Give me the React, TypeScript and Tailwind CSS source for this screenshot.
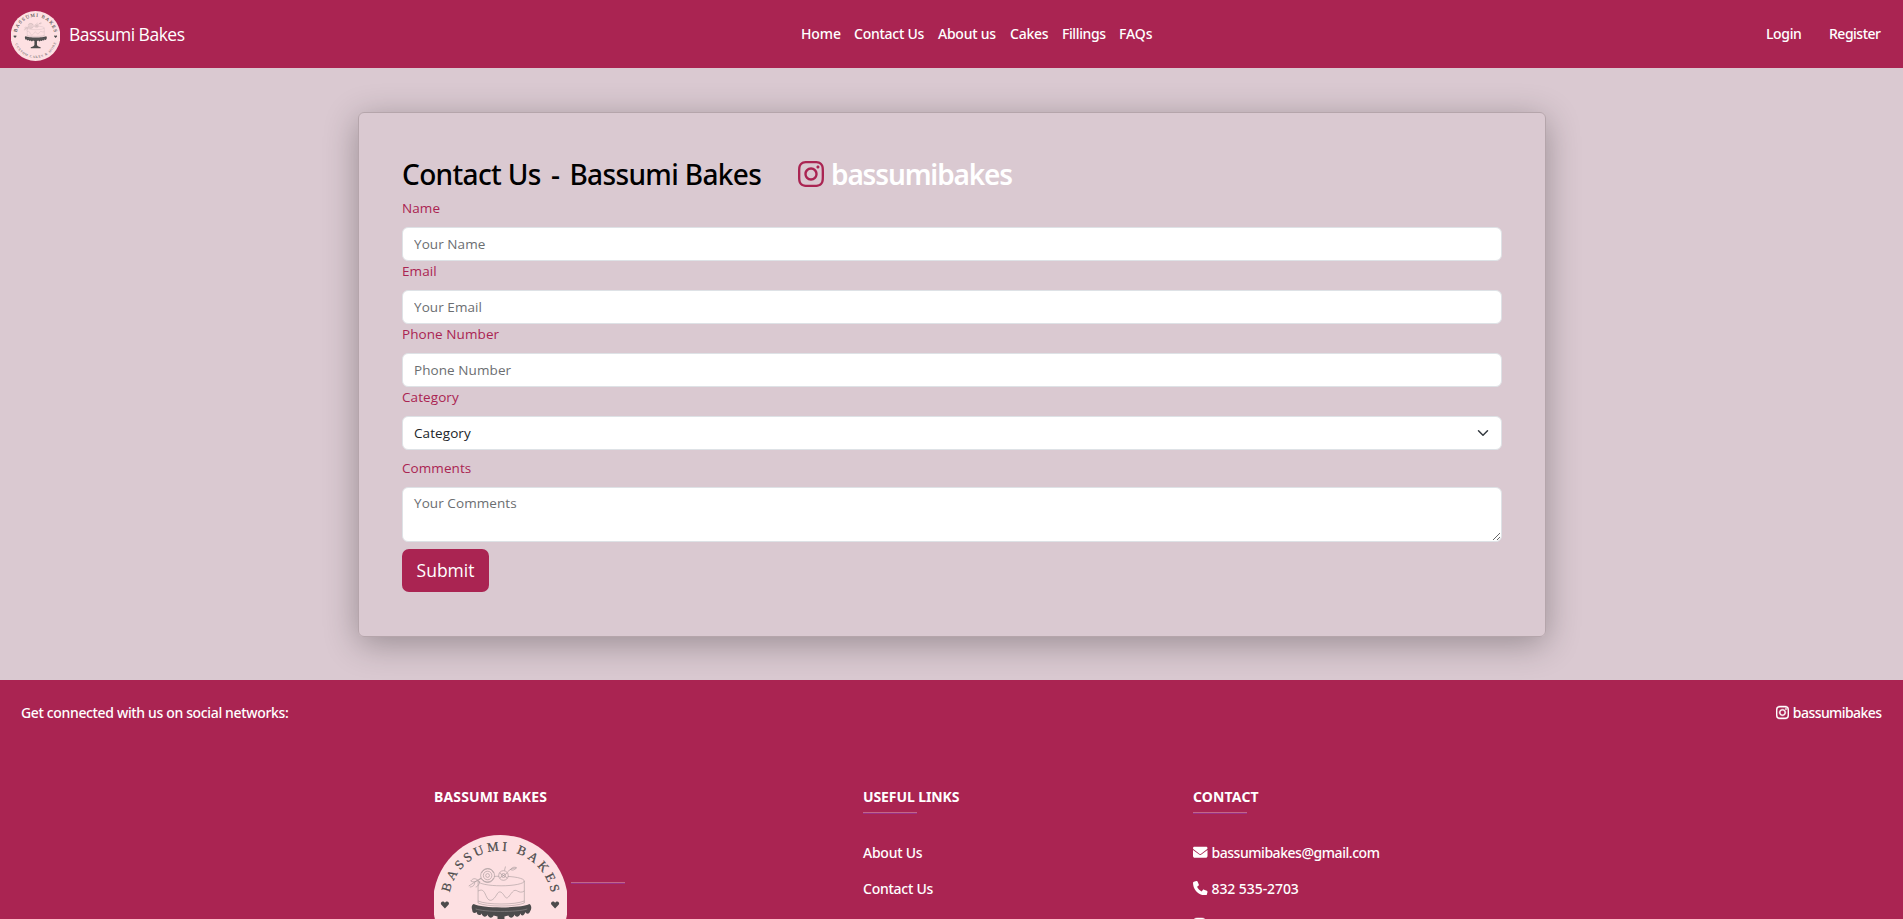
import type { ReactNode } from "react";
import { FaEnvelope, FaInstagram, FaPhone } from "react-icons/fa6";

function Logo({ id, className }: { id: string; className: string }) {
  return (
    <svg viewBox="0 0 134 136" preserveAspectRatio="none" className={className}>
      <defs>
        <path id={`${id}-top`} d="M15.5 59.5 A52.2 52.2 0 0 1 118.5 59.5" />
        <path id={`${id}-bottom`} d="M10 86 A59.8 59.8 0 0 0 124 86" />
      </defs>
      <circle cx="67" cy="68" r="68" fill="#fde0e2" />
      <g fill="#4c4b4c" fontFamily="'Liberation Serif', serif">
        <text fontSize="13" stroke="#4c4b4c" strokeWidth="0.25">
          <textPath href={`#${id}-top`} startOffset="2" textLength="143">BASSUMI BAKES</textPath>
        </text>
        <text fontSize="9">
          <textPath href={`#${id}-bottom`} startOffset="4" textLength="146">CUSTOM CAKES &amp; MORE</textPath>
        </text>
        <path d="M11 73.5 L7.2 69.6 C5.8 67 9.4 65.2 11 67.8 C12.6 65.2 16.2 67 14.8 69.6 Z" />
        <path d="M122 73.5 L118.2 69.6 C116.8 67 120.4 65.2 122 67.8 C123.6 65.2 127.2 67 125.8 69.6 Z" />
        <path d="M40 69 C48 73.5 88 73.5 96 69 C98.500 70 98.500 74 97 76 C95.500 80 93 79 92 77 C91 81 88 81.500 87 78.500 C86 82.500 82 82.500 81 79.500 C80 83.500 76 83.500 75 80.500 L71 81.500 L71 92 C71 95.500 75 97 81 98.500 L81 101.500 L54 101.500 L54 98.500 C60 97 64 95.500 64 92 L64 81.500 L60 80.500 C59 83.500 55 83.500 54 79.500 C53 82.500 49 82.500 48 78.500 C47 81 43 80.500 43 77 C41 79 38.500 78 38.500 75 C37.500 72 38 70 40 69 Z" />
      </g>
      <path d="M42 74 C51 77 83 77.500 94 74" fill="none" stroke="#8a8586" strokeWidth="0.7" />
      <g fill="none" stroke="#a79a9c" strokeWidth="0.6">
        <ellipse cx="67.700" cy="46" rx="23.300" ry="4.800" />
        <path d="M44.400 46 V68 C53 72 82 72 91 68 V46" />
        <path d="M44.400 66 C53 70 82 70 91 66" />
        <path d="M44.400 56 C50 53 51 58 53 62 C56 68 60 65 63 60 C66 54 69 58 71 61 C74 66 76 60 79 57 C83 52 85 60 91 56" />
      </g>
      <g fill="none" stroke="#9a8f91" strokeWidth="0.55">
        <circle cx="54" cy="40.500" r="7" fill="#fde0e2" />
        <circle cx="54" cy="40.500" r="4.300" />
        <circle cx="54" cy="40.500" r="1.900" />
        <path d="M48 38 C50 33 58 32 60 38 M48 44 C51 48 58 48 60 43" />
        <circle cx="70" cy="40.500" r="4.800" fill="#fde0e2" />
        <circle cx="70" cy="40.500" r="2" />
        <path d="M66 38 L74 43 M74 38 L66 43 M71 35.500 L72 31.500 M74 37 C78 33 80 33.500 83 33 M77 34.500 C80 30.500 84 33 83 33 C80 36 78 35 77 34.500" />
        <path d="M47.500 43 L35 51 M44 45 C40 42 38 45 37 46 C40 48 43 46 44 45 M41 47.500 C41 51 38 52 36 52 M46 46 C46 50 43 52 42 52" />
      </g>
    </svg>
  );
}

const links = [
  { label: "Home", cls: "w-[53px] tracking-[-0.1px]" },
  { label: "Contact Us", cls: "w-[84px] tracking-[-0.25px]" },
  { label: "About us", cls: "w-[72px] tracking-[-0.25px]" },
  { label: "Cakes", cls: "w-[52px] tracking-[-0.25px]" },
  { label: "Fillings", cls: "w-[57px] tracking-[-0.4px]" },
  { label: "FAQs", cls: "w-[34px] tracking-[-0.1px]" },
];

const fieldClass =
  "block w-full rounded-[6px] border border-[#dee2e6] bg-white pl-[11.500px] pr-[11px] text-[13.5px] leading-[21px] tracking-[0.08px] text-[#212529] placeholder:text-[#6b6e71] placeholder:opacity-100 outline-none";

function Label({ children, cls = "" }: { children: ReactNode; cls?: string }) {
  return (
    <label className={`mb-[8px] block pl-[0.500px] text-[13.5px] leading-[21px] tracking-[0.08px] text-[#aa2452] ${cls}`}>
      {children}
    </label>
  );
}

function Rule({ className = "" }: { className?: string }) {
  return <hr className={`h-[2px] w-[54px] border-0 border-t border-white bg-[#7c4dff] opacity-30 ${className}`} />;
}

export default function App() {
  return (
    <div className="flex h-[919px] flex-col overflow-hidden bg-[#dac9d1] font-['Open_Sans',sans-serif] text-[14px] leading-[21px]">
      <nav className="flex h-[68px] shrink-0 items-center bg-[#aa2452] pb-px font-['Noto_Sans',sans-serif] font-medium text-white">
        <div className="flex w-[801px] items-center pl-[11px]">
          <Logo id="brand" className="mt-[5px] h-[50px] w-[49px]" />
          <a className="ml-[9px] mt-[2px] whitespace-nowrap font-['Open_Sans',sans-serif] text-[17.5px] tracking-[-0.5px]">Bassumi Bakes</a>
        </div>
        <ul className="flex">
          {links.map((l) => (
            <li key={l.label} className={`whitespace-nowrap ${l.cls}`}>{l.label}</li>
          ))}
        </ul>
        <div className="ml-auto flex pr-[22px]">
          <a className="w-[63px] tracking-[-0.36px]">Login</a>
          <a className="w-[52px] tracking-[-0.5px]">Register</a>
        </div>
      </nav>

      <main className="flex h-[612px] shrink-0 justify-center pt-[44px]">
        <section className="h-[525px] w-[1188px] rounded-[6px] border border-[#b5a5ab] px-[43px] pt-[43px] shadow-[0_7px_34px_rgba(0,0,0,0.3)]">
          <div className="flex h-[41.7px] items-start pl-[0.500px] font-['Noto_Sans',sans-serif]">
            <h1 className="w-[395.5px] whitespace-nowrap text-[28px] font-medium leading-[36px] tracking-[-0.64px] text-black">
              Contact Us <span className="mx-[3.5px]">-</span> Bassumi Bakes
            </h1>
            <FaInstagram className="mt-[3px] h-[30px] w-[26px] text-[#aa2452]" />
            <span className="ml-[7.500px] text-[28px] font-semibold leading-[36px] tracking-[-1.15px] text-white">bassumibakes</span>
          </div>
          <form>
            <Label>Name</Label>
            <input className={`h-[34.2px] ${fieldClass}`} placeholder="Your Name" />
            <Label>Email</Label>
            <input className={`h-[34.2px] ${fieldClass}`} placeholder="Your Email" />
            <Label>Phone Number</Label>
            <input className={`h-[34.2px] ${fieldClass}`} placeholder="Phone Number" />
            <Label>Category</Label>
            <div className="relative">
              <select className={`h-[34.2px] appearance-none ${fieldClass}`}>
                <option>Category</option>
              </select>
              <svg viewBox="0 0 16 16" className="pointer-events-none absolute right-[13px] top-[10.500px] h-[12px] w-[12px]">
                <path d="m2 5 6 6 6-6" fill="none" stroke="#343a40" strokeWidth="2" strokeLinecap="round" strokeLinejoin="round" />
              </svg>
            </div>
            <Label cls="mt-[7.500px]">Comments</Label>
            <textarea className={`h-[55.5px] resize-y py-[5px] ${fieldClass}`} placeholder="Your Comments" />
            <button type="button" className="mt-[7px] h-[43px] w-[87px] rounded-[7px] bg-[#aa2452] pl-px text-[17.5px] text-white">
              Submit
            </button>
          </form>
        </section>
      </main>

      <footer className="h-[300px] shrink-0 bg-[#aa2452] font-['Noto_Sans',sans-serif] font-medium text-white">
        <div className="flex justify-between pl-[21px] pr-[21.500px] pt-[22px]">
          <span className="tracking-[-0.35px]">Get connected with us on social networks:</span>
          <span className="flex items-center tracking-[-0.57px]">
            <FaInstagram className="mr-[4px] h-[15px] w-[13px] stroke-white [stroke-width:16]" />
            bassumibakes
          </span>
        </div>
        <div className="flex pl-[434px] pt-[63px]">
          <div className="w-[429px]">
            <h6 className="font-bold tracking-[0.15px]">BASSUMI BAKES</h6>
            <div className="mt-[27.500px] flex items-start">
              <Logo id="footer" className="h-[136px] w-[133px]" />
              <Rule className="ml-[4px] mt-[47px]" />
            </div>
          </div>
          <div className="w-[330px]">
            <h6 className="font-bold tracking-[-0.1px]">USEFUL LINKS</h6>
            <Rule className="mt-[5px]" />
            <p className="mt-[28px] tracking-[-0.25px]">About Us</p>
            <p className="mt-[14.500px] tracking-[-0.25px]">Contact Us</p>
          </div>
          <div>
            <h6 className="font-bold tracking-[0.15px]">CONTACT</h6>
            <Rule className="mt-[5px]" />
            <p className="mt-[28px] flex items-center tracking-[-0.46px]">
              <FaEnvelope className="mr-[4px] h-[14.500px] w-[14.500px]" />
              bassumibakes@gmail.com
            </p>
            <p className="mt-[14.500px] flex items-center tracking-[-0.08px]">
              <FaPhone className="mr-[4px] h-[14.500px] w-[14.500px]" />
              832 535-2703
            </p>
            <p className="mt-[16px] flex items-center tracking-[-0.5px]">
              <FaInstagram className="-mt-px mr-[5px] h-[15px] w-[13px] stroke-white [stroke-width:16]" />
              bassumibakes
            </p>
          </div>
        </div>
      </footer>
    </div>
  );
}
